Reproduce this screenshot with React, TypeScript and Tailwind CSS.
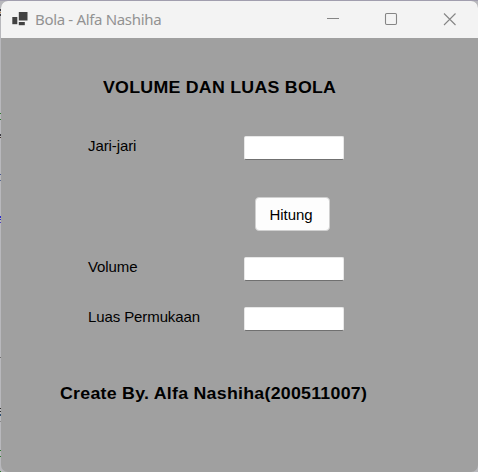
import React from "react";

const marks = [
  { y: 9, h: 2, c: "bg-[#3a3a40]" },
  { y: 12, h: 1, c: "bg-[#b98a5a]" },
  { y: 14, h: 2, c: "bg-[#3a3a40]" },
  { y: 113, h: 1, c: "bg-[#2f7a2f]" },
  { y: 119, h: 1, c: "bg-[#2f7a2f]" },
  { y: 134, h: 2, c: "bg-[#3a3a40]" },
  { y: 137, h: 1, c: "bg-[#4a3a30]" },
  { y: 174, h: 1, c: "bg-[#4a5a90]" },
  { y: 180, h: 1, c: "bg-[#5a6a90]" },
  { y: 216, h: 2, c: "bg-[#2a2ac8]" },
  { y: 219, h: 1, c: "bg-[#2a2ac8]" },
  { y: 222, h: 1, c: "bg-[#4a3ac0]" },
  { y: 357, h: 1, c: "bg-[#707070]" },
  { y: 408, h: 1, c: "bg-[#303030]" },
  { y: 411, h: 1, c: "bg-[#303030]" },
  { y: 414, h: 2, c: "bg-[#305070]" },
  { y: 421, h: 1, c: "bg-[#888888]" },
  { y: 450, h: 1, c: "bg-[#2f7a2f]" },
  { y: 456, h: 1, c: "bg-[#2f7a2f]" },
  { y: 471, h: 1, c: "bg-[#2f7a2f]" },
];

function Field() {
  return (
    <input
      readOnly
      className="block h-6 w-[100px] rounded-[2px] border border-[#e8e8e8] border-b-[#707070] bg-white outline-none"
    />
  );
}

function Row({ label }: { label: string }) {
  return (
    <div className="flex h-6">
      <label className="w-[156px] whitespace-nowrap pt-px text-[15px] leading-[18px] tracking-[-0.1px]">
        {label}
      </label>
      <Field />
    </div>
  );
}

export default function App() {
  return (
    <div className="relative h-[472px] w-[478px] overflow-hidden bg-[#b8b8bc] pl-px pt-px font-['Liberation_Sans',Arial,sans-serif] text-black">
      {marks.map((m) => (
        <span key={m.y} className={`absolute left-0 w-px ${m.c}`} style={{ top: m.y, height: m.h }} />
      ))}
      <div className="absolute inset-x-0 top-0 h-px bg-[#a19eae]" />
      <div className="relative flex h-[471px] w-[477px] flex-col overflow-hidden rounded-[7px] bg-[#a0a0a0]">
        <header className="flex h-[37px] shrink-0 items-center bg-[#f3f3f3] text-[#929292]">
          <svg width="16" height="16" viewBox="0 0 16 16" className="mb-px ml-[11px] shrink-0" fill="#424242">
            <rect x="6.8" y="1" width="8.7" height="8.5" />
            <rect x="0.3" y="6" width="5" height="7.2" />
            <rect x="6.8" y="11" width="6" height="3.2" />
          </svg>
          <span className="mb-[2px] ml-[7px] whitespace-nowrap font-['Noto_Sans',sans-serif] text-[15px] leading-5 tracking-[-0.33px]">Bola - Alfa Nashiha</span>
          <svg width="132" height="14" viewBox="0 0 132 14" className="mb-px ml-auto mr-5" fill="none" stroke="#858585">
            <path d="M1 6.5H13" />
            <rect x="59.5" y="1.5" width="11" height="11" rx="1.2" strokeWidth="1.1" />
            <path d="M118 1.5L129.5 13M129.5 1.5L118 13" strokeWidth="1.1" />
          </svg>
        </header>
        <main className="flex flex-col pl-[87px]">
          <h1 className="ml-[15px] mt-10 h-5 origin-left scale-x-[1.045] whitespace-nowrap text-[17px] font-bold leading-5 tracking-[0.25px]">VOLUME DAN LUAS BOLA</h1>
          <div className="mt-[38px]"><Row label="Jari-jari" /></div>
          <button className="ml-[167px] mt-[37px] h-[34px] w-[75px] rounded-[4px] border border-[#d0d0d0] bg-[#fdfdfd] pr-[3px] pt-px text-[15px] leading-5 tracking-[-0.07px]">
            Hitung
          </button>
          <div className="mt-[26px]"><Row label="Volume" /></div>
          <div className="mt-[26px]"><Row label="Luas Permukaan" /></div>
          <p className="-ml-[28px] mt-[53px] origin-left scale-x-[1.045] whitespace-nowrap text-[17px] font-bold leading-5 tracking-[0.25px]">Create By. Alfa Nashiha(200511007)</p>
        </main>
      </div>
    </div>
  );
}
